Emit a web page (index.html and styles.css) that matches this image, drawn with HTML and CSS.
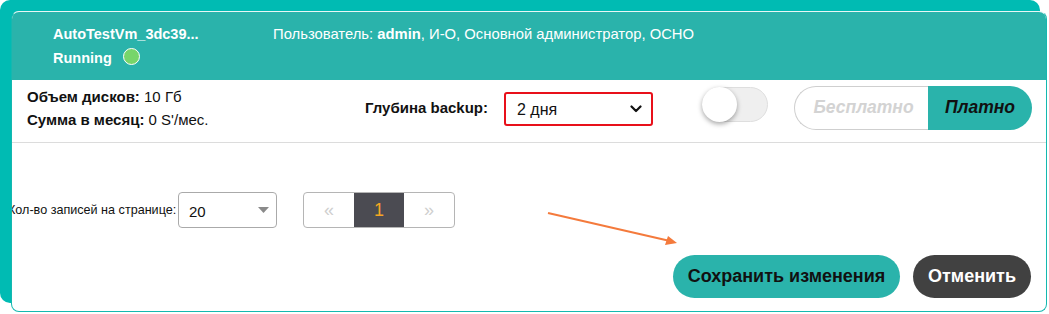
FILE: index.html
```html
<!DOCTYPE html>
<html lang="ru">
<head>
<meta charset="utf-8">
<link rel="stylesheet" href="styles.css">
</head>
<body>
<div class="backcard">
  <div class="panel">
    <div class="head">
      <div class="vm">
        <div class="vm-name">AutoTestVm_3dc39...</div>
        <div class="vm-state">Running <span class="dot"></span></div>
      </div>
      <div class="user">Пользователь: <b>admin</b>, И-О, Основной администратор, ОСНО</div>
    </div>

    <div class="settings">
      <div class="info">
        <div><b>Объем дисков:</b> 10 Гб</div>
        <div><b>Сумма в месяц:</b> 0 S'/мес.</div>
      </div>
      <div class="depth-label">Глубина backup:</div>
      <div class="depth-select">
        <span>2 дня</span>
        <svg class="chev" width="12" height="8" viewBox="0 0 12 8"><polyline points="1.5,1.5 6,6 10.5,1.5" fill="none" stroke="#111" stroke-width="2.2" stroke-linecap="round" stroke-linejoin="round"/></svg>
      </div>
      <div class="toggle"><span class="knob"></span></div>
      <div class="seg">
        <div class="seg-free">Бесплатно</div>
        <div class="seg-paid">Платно</div>
      </div>
    </div>

    <div class="pager-row">
      <div class="per-page">Кол-во записей на странице:</div>
      <div class="count-select">
        <span>20</span>
        <svg width="11" height="6" viewBox="0 0 11 6"><polygon points="0,0 11,0 5.5,6" fill="#8a8a8a"/></svg>
      </div>
      <div class="pager">
        <div class="pg pg-arrow">«</div>
        <div class="pg pg-active">1</div>
        <div class="pg pg-arrow">»</div>
      </div>
    </div>

    <div class="actions">
      <button class="btn btn-save">Сохранить изменения</button>
      <button class="btn btn-cancel">Отменить</button>
    </div>

    <svg class="annot" width="140" height="40" viewBox="0 0 140 40">
      <line x1="2" y1="3" x2="124" y2="31" stroke="#f47a3c" stroke-width="2"/>
      <polygon points="131,33 119,35 122,26" fill="#f47a3c"/>
    </svg>
  </div>
</div>
</body>
</html>
```
FILE: styles.css
```css
* { box-sizing: border-box; }
html, body { margin: 0; padding: 0; background: #fff; }
body {
  font-family: "Liberation Sans", Arial, sans-serif;
  width: 1049px;
  height: 314px;
  overflow: hidden;
}
.backcard {
  width: 1040px;
  height: 303px;
  background: #00bbb3;
  border-radius: 10px;
  padding: 11px 0 0 11px;
}
.panel {
  position: relative;
  width: 1036px;
  height: 301px;
  background: #fff;
  border: 1px solid #14b8b0;
  border-top-color: #e8f7f6;
  border-radius: 8px;
  overflow: hidden;
  display: flex;
  flex-direction: column;
}
.head {
  height: 68px;
  background: #2ab3ab;
  color: #fff;
  display: flex;
  padding: 11px 0 0 41px;
  font-size: 14.8px;
}
.vm { width: 220px; }
.vm-name { font-weight: bold; font-size: 14.5px; line-height: 22px; }
.vm-state { font-weight: bold; font-size: 14.5px; line-height: 26px; display: flex; align-items: center; }
.dot {
  display: inline-block;
  width: 17px;
  height: 17px;
  border-radius: 50%;
  background: #77d56a;
  border: 1px solid #fff;
  margin-left: 11px;
  margin-top: -4px;
}
.user { line-height: 22px; }
.user b { font-weight: bold; }

.settings {
  height: 63px;
  border-bottom: 1px solid #dcdcdc;
  display: flex;
  align-items: center;
  padding-left: 15px;
  padding-bottom: 8px;
  font-size: 15px;
  color: #111;
}
.info { width: 338px; line-height: 23px; margin-top: 2px; }
.depth-label { width: 139px; font-weight: bold; margin-top: 1px; }
.depth-select {
  width: 149px;
  height: 34px;
  border: 2px solid #e8101a;
  border-radius: 3px;
  display: flex;
  align-items: center;
  justify-content: space-between;
  padding: 0 9px 0 11px;
  font-size: 16px;
  margin-top: 3px;
}
.depth-select span { margin-top: 2px; }
.toggle {
  margin-left: 49px;
  width: 66px;
  height: 35px;
  border-radius: 18px;
  background: #efefef;
  border: 1px solid #dedede;
  position: relative;
  margin-top: -5px;
}
.knob {
  position: absolute;
  left: -1px;
  top: -1px;
  width: 35px;
  height: 35px;
  border-radius: 50%;
  background: #fff;
  box-shadow: 0 2px 5px rgba(0,0,0,0.35);
}
.seg {
  margin-left: 26px;
  width: 238px;
  height: 44px;
  display: flex;
  font-size: 17.5px;
  font-weight: bold;
  font-style: italic;
  margin-top: 1px;
}
.seg-free {
  width: 134px;
  border: 1px solid #cfcfcf;
  border-right: none;
  border-radius: 22px 0 0 22px;
  color: #d3d3d3;
  display: flex;
  align-items: center;
  justify-content: center;
  padding-left: 4px;
}
.seg-paid {
  width: 104px;
  background: #2ab3ab;
  border-radius: 0 22px 22px 0;
  color: #111;
  display: flex;
  align-items: center;
  justify-content: center;
}

.pager-row {
  display: flex;
  align-items: center;
  padding-top: 49px;
  height: 85px;
  font-size: 12.6px;
  color: #111;
}
.per-page {
  margin-left: -4px;
  width: 170px;
  padding-right: 3px;
  text-align: right;
  white-space: nowrap;
  overflow: visible;
}
.count-select {
  width: 99px;
  height: 36px;
  border: 1px solid #aaa;
  border-radius: 4px;
  display: flex;
  align-items: center;
  justify-content: space-between;
  padding: 0 7px 0 10px;
  font-size: 15px;
}
.count-select span { margin-top: 2px; }
.pager {
  margin-left: 26px;
  display: flex;
  height: 36px;
  border: 1px solid #b5b5b5;
  border-radius: 4px;
  overflow: hidden;
}
.pg {
  width: 50px;
  display: flex;
  align-items: center;
  justify-content: center;
}
.pg-arrow { color: #cfcfcf; font-size: 18px; }
.pg-active { background: #4b4b52; color: #f5a623; font-size: 18px; }

.actions {
  display: flex;
  justify-content: flex-end;
  gap: 13px;
  padding-right: 15px;
  margin-top: 27px;
}
.btn {
  height: 43px;
  border: none;
  border-radius: 22px;
  font-family: "Liberation Sans", Arial, sans-serif;
  font-weight: bold;
  font-size: 18px;
  padding: 0;
}
.btn-save { width: 227px; background: #2ab3ab; color: #111; }
.btn-cancel { width: 118px; background: #414141; color: #fff; }

.annot {
  position: absolute;
  left: 534px;
  top: 198px;
}
```
